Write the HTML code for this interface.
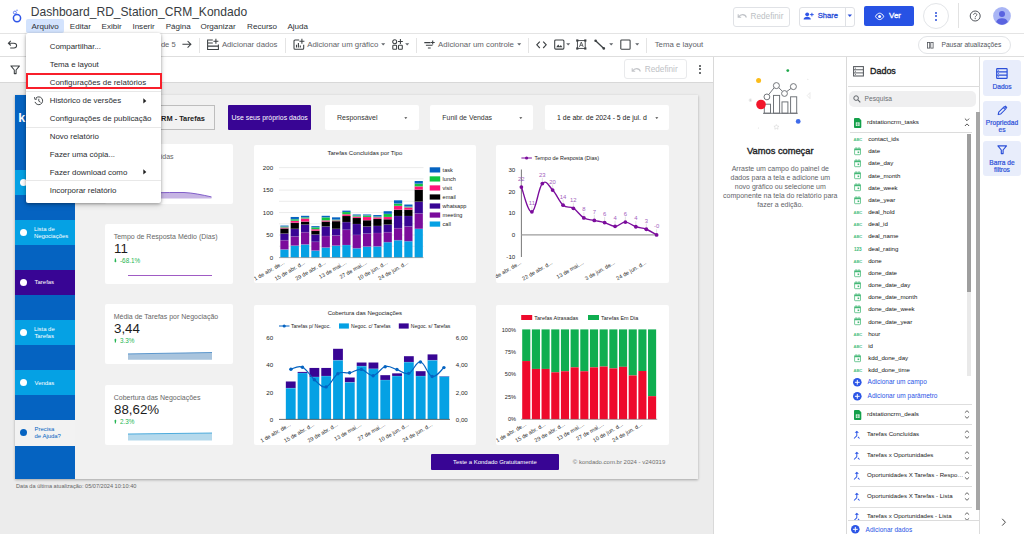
<!DOCTYPE html>
<html lang="pt-BR">
<head>
<meta charset="utf-8">
<title>Dashboard_RD_Station_CRM_Kondado</title>
<style>
*{box-sizing:border-box;margin:0;padding:0}
html,body{width:1024px;height:534px;overflow:hidden;background:#fff}
body{font-family:"Liberation Sans",sans-serif;color:#3c4043;position:relative}
.a{position:absolute}
.t{position:absolute;white-space:nowrap;line-height:1}
svg{position:absolute;overflow:visible}
</style>
</head>
<body>
<!-- base -->
<div class="a" style="left:0px;top:0px;width:1024px;height:33px;background:#fff;border-bottom:1px solid #e4e4e4;height:34px"></div>
<div class="a" style="left:0px;top:34px;width:1024px;height:23px;background:#fff;border-bottom:1px solid #dedede"></div>
<div class="a" style="left:0px;top:57px;width:714px;height:26px;background:#fff;border-bottom:1px solid #d8d8d8"></div>
<div class="a" style="left:0px;top:83px;width:714px;height:451px;background:#ececec;"></div>
<div class="a" style="left:14.5px;top:95px;width:683.6px;height:384px;background:#f1f1f1;box-shadow:0 1px 2.5px rgba(0,0,0,.3)"></div>
<div class="a" style="left:713px;top:57px;width:134px;height:477px;background:#fff;border-left:1px solid #d9d9d9"></div>
<div class="a" style="left:846.3px;top:57px;width:134px;height:477px;background:#fff;border-left:1px solid #d9d9d9"></div>
<div class="a" style="left:979.2px;top:57px;width:45px;height:477px;background:#fff;border-left:1px solid #d9d9d9"></div>
<!-- header -->
<svg style="left:10px;top:7px;" width="16" height="20" viewBox="0 0 16 20"><circle cx="7" cy="11.1" r="3.6" fill="none" stroke="#2f55e8" stroke-width="1.5"/><circle cx="4.9" cy="5.6" r="1.5" fill="none" stroke="#4a6cf0" stroke-width="0.85"/><circle cx="7" cy="3.2" r="0.75" fill="#6b86f3"/></svg>
<div class="a" style="left:26px;top:19px;width:38px;height:14px;background:#d3e3fd;border-radius:2px"></div>
<div class="t" style="left:30.80px;top:6px;font-size:12.05px;color:#383c41;">Dashboard_RD_Station_CRM_Kondado</div>
<div class="t" style="left:31.40px;top:23px;font-size:8.05px;color:#2d3136;">Arquivo</div>
<div class="t" style="left:69.80px;top:23px;font-size:8.05px;color:#2d3136;">Editar</div>
<div class="t" style="left:101.60px;top:23px;font-size:8.05px;color:#2d3136;">Exibir</div>
<div class="t" style="left:132.40px;top:23px;font-size:8.05px;color:#2d3136;">Inserir</div>
<div class="t" style="left:165.70px;top:23px;font-size:8.05px;color:#2d3136;">Página</div>
<div class="t" style="left:200.40px;top:23px;font-size:8.05px;color:#2d3136;">Organizar</div>
<div class="t" style="left:247.10px;top:23px;font-size:8.05px;color:#2d3136;">Recurso</div>
<div class="t" style="left:287.40px;top:23px;font-size:8.05px;color:#2d3136;">Ajuda</div>
<div class="a" style="left:733px;top:6.5px;width:57px;height:20px;background:#fff;border:1px solid #e0e2e6;border-radius:3px"></div>
<svg style="left:737px;top:12px;" width="10" height="8" viewBox="0 0 10 8"><path d="M1.2 2.2v3h3M1.4 5.1C2.6 3.4 4 2.6 5.6 2.6c1.9 0 3.2 1 3.8 2.9" fill="none" stroke="#bfc2c7" stroke-width="1.1"/></svg>
<div class="t" style="left:750.60px;top:13px;font-size:8.2px;color:#bcbfc4;">Redefinir</div>
<div class="a" style="left:799px;top:6.5px;width:56px;height:20px;background:#fff;border:1px solid #dfe1e5;border-radius:3px"></div>
<div class="a" style="left:844.5px;top:7px;width:1px;height:19px;background:#dfe1e5;"></div>
<svg style="left:803px;top:11px;" width="11" height="10" viewBox="0 0 11 10"><circle cx="4.2" cy="3.3" r="1.9" fill="#2f55e8"/><path d="M0.6 8.6c0-1.9 1.7-2.8 3.6-2.8s3.6 0.9 3.6 2.8z" fill="#2f55e8"/><path d="M8.9 1.8v3.6M7.1 3.6h3.6" stroke="#2f55e8" stroke-width="1" fill="none"/></svg>
<div class="t" style="left:817.70px;top:12px;font-size:7.65px;color:#2b4fd8;-webkit-text-stroke:0.3px #2b4fd8;">Share</div>
<svg style="left:846.8px;top:14.4px;" width="6" height="4" viewBox="0 0 6 4"><path d="M0.6 0.4h4.4L2.8 3z" fill="#2b4fd8"/></svg>
<div class="a" style="left:864px;top:6px;width:50px;height:20px;background:#2752e4;border-radius:2px"></div>
<svg style="left:875px;top:11.5px;" width="10" height="9" viewBox="0 0 10 9"><path d="M0.5 4.4C1.6 2.3 3.1 1.2 4.6 1.2s3 1.1 4.1 3.2C7.6 6.5 6.1 7.6 4.6 7.6S1.6 6.5 0.5 4.4z" fill="none" stroke="#fff" stroke-width="1"/><circle cx="4.6" cy="4.4" r="1.5" fill="#fff"/></svg>
<div class="t" style="left:889.00px;top:12px;font-size:8.0px;color:#fff;-webkit-text-stroke:0.3px #fff;">Ver</div>
<div class="a" style="left:923px;top:3px;width:26px;height:26px;background:#fff;border:1px solid #e3e5e8;border-radius:50%"></div>
<div class="a" style="left:934.9px;top:11.7px;width:2.2px;height:2.2px;background:#2b4fd8;border-radius:50%"></div>
<div class="a" style="left:934.9px;top:15.2px;width:2.2px;height:2.2px;background:#2b4fd8;border-radius:50%"></div>
<div class="a" style="left:934.9px;top:18.7px;width:2.2px;height:2.2px;background:#2b4fd8;border-radius:50%"></div>
<div class="a" style="left:958px;top:3px;width:1px;height:25px;background:#e2e2e2;"></div>
<svg style="left:969px;top:10px;" width="12" height="12" viewBox="0 0 12 12"><circle cx="6.2" cy="6" r="5" fill="none" stroke="#50545a" stroke-width="1"/><path d="M4.6 4.9c0-1 0.7-1.6 1.6-1.6s1.6 0.6 1.6 1.5c0 1.1-1.6 1.2-1.6 2.5" fill="none" stroke="#50545a" stroke-width="0.9"/><circle cx="6.2" cy="8.6" r="0.6" fill="#50545a"/></svg>
<svg style="left:992.5px;top:7px;" width="18" height="18" viewBox="0 0 18 18"><circle cx="9" cy="9" r="8.9" fill="#a9b5f5"/><circle cx="9" cy="6.9" r="3" fill="#5a63e0"/><path d="M3.2 14.8c0.8-2.6 3-3.6 5.8-3.6s5 1 5.8 3.6c-1.6 1.8-3.5 2.9-5.8 2.9s-4.2-1.1-5.8-2.9z" fill="#5a63e0"/></svg>
<!-- toolbar -->
<svg style="left:7.0px;top:39.5px;" width="12" height="10" viewBox="0 0 12 10"><path d="M3.8 0.9L1.4 3.2l2.4 2.3M1.6 3.2h5.3c1.6 0 2.7 1 2.7 2.4S8.5 8 6.9 8H3.2" fill="none" stroke="#3c4043" stroke-width="1.05"/></svg>
<div class="t" style="left:160.90px;top:41px;font-size:7.6px;color:#5f6368;">de 5</div>
<svg style="left:182.0px;top:40.0px;" width="10" height="9" viewBox="0 0 10 9"><path d="M0.4 4.3h8.4M5.6 1l3.3 3.3-3.3 3.3" fill="none" stroke="#3c4043" stroke-width="1.05"/></svg>
<div class="a" style="left:198.6px;top:38px;width:1px;height:15px;background:#e4e4e4;"></div>
<div class="a" style="left:284.9px;top:38px;width:1px;height:15px;background:#e4e4e4;"></div>
<div class="a" style="left:416.1px;top:38px;width:1px;height:15px;background:#e4e4e4;"></div>
<div class="a" style="left:528.3px;top:38px;width:1px;height:15px;background:#e4e4e4;"></div>
<div class="a" style="left:646.4px;top:38px;width:1px;height:15px;background:#e4e4e4;"></div>
<svg style="left:206.5px;top:39.3px;" width="12" height="11" viewBox="0 0 12 11"><path d="M5.8 0.9H0.6V10.4H11.4V5.6M0.6 3.9H5.8M0.6 7.1H11.4" fill="none" stroke="#3c4043" stroke-width="1.05"/><path d="M8.9 -0.3v5M6.4 2.2h5" fill="none" stroke="#3c4043" stroke-width="1.05"/></svg>
<div class="t" style="left:221.90px;top:41px;font-size:7.75px;color:#5f6368;">Adicionar dados</div>
<svg style="left:292.5px;top:39.3px;" width="12" height="11" viewBox="0 0 12 11"><path d="M6.2 1H2Q1 1 1 2V9.2Q1 10.2 2 10.2H9.7Q10.7 10.2 10.7 9.2V5.7" fill="none" stroke="#3c4043" stroke-width="1.05"/><path d="M3.5 8.4V5.7M5.4 8.4V4M7.3 8.4V6.5" stroke="#3c4043" stroke-width="1.1" fill="none"/><path d="M8.9 -0.3v5M6.4 2.2h5" fill="none" stroke="#3c4043" stroke-width="1.05"/></svg>
<div class="t" style="left:307.20px;top:41px;font-size:7.8px;color:#5f6368;">Adicionar um gráfico</div>
<svg style="left:381.2px;top:43.1px;" width="5" height="3" viewBox="0 0 5 3"><path d="M0.2 0.2h4L2.2 2.6z" fill="#5f6368"/></svg>
<svg style="left:392px;top:39.2px;" width="11" height="11" viewBox="0 0 11 11"><circle cx="2.7" cy="2.8" r="2" fill="none" stroke="#3c4043" stroke-width="1.05"/><rect x="0.8" y="6.3" width="3.8" height="4" rx="0.6" fill="none" stroke="#3c4043" stroke-width="1.05"/><rect x="6.5" y="6.3" width="3.8" height="4" rx="0.6" fill="none" stroke="#3c4043" stroke-width="1.05"/><path d="M8.4 0.1v4.8M6 2.5h4.8" stroke="#3c4043" stroke-width="1.05" fill="none"/></svg>
<svg style="left:405.2px;top:43.1px;" width="5" height="3" viewBox="0 0 5 3"><path d="M0.2 0.2h4L2.2 2.6z" fill="#5f6368"/></svg>
<svg style="left:424.0px;top:39.5px;" width="11" height="10" viewBox="0 0 11 10"><path d="M0.3 2.6h6.2M1.9 5.3h6.6M3.9 8h2.8" stroke="#3c4043" stroke-width="1.05" fill="none"/><path d="M8.7 0.5v4M6.7 2.5h4" stroke="#3c4043" stroke-width="1.05" fill="none"/></svg>
<div class="t" style="left:438.10px;top:41px;font-size:7.85px;color:#5f6368;">Adicionar um controle</div>
<svg style="left:516.6px;top:43.1px;" width="5" height="3" viewBox="0 0 5 3"><path d="M0.2 0.2h4L2.2 2.6z" fill="#5f6368"/></svg>
<svg style="left:536.0px;top:40.5px;" width="12" height="8" viewBox="0 0 12 8"><path d="M3.8 0.6L0.8 3.8l3 3.2M7.2 0.6l3 3.2-3 3.2" fill="none" stroke="#3c4043" stroke-width="1.1"/></svg>
<svg style="left:553.5px;top:39.3px;" width="11" height="11" viewBox="0 0 11 11"><rect x="0.7" y="0.9" width="9.2" height="9.2" rx="1" fill="none" stroke="#3c4043" stroke-width="1.05"/><path d="M2.2 8.2l2-2.6 1.5 1.8 1.1-1.3 1.6 2.1z" fill="#3c4043"/></svg>
<svg style="left:566.4px;top:43.1px;" width="5" height="3" viewBox="0 0 5 3"><path d="M0.2 0.2h4L2.2 2.6z" fill="#5f6368"/></svg>
<svg style="left:576.3px;top:39.3px;" width="11" height="11" viewBox="0 0 11 11"><rect x="1.4" y="1.6" width="7.8" height="7.8" fill="none" stroke="#3c4043" stroke-width="0.9"/><rect x="0.2" y="0.4" width="2.2" height="2.2" fill="#3c4043"/><rect x="8.2" y="0.4" width="2.2" height="2.2" fill="#3c4043"/><rect x="0.2" y="8.4" width="2.2" height="2.2" fill="#3c4043"/><rect x="8.2" y="8.4" width="2.2" height="2.2" fill="#3c4043"/><path d="M3.4 7.9l1.9-4.8 1.9 4.8M4.1 6.3h2.4" fill="none" stroke="#3c4043" stroke-width="0.8"/></svg>
<svg style="left:593.5px;top:39.3px;" width="12" height="11" viewBox="0 0 12 11"><path d="M1.6 1.8l8.2 7.6" stroke="#3c4043" stroke-width="1.3" fill="none"/><circle cx="1.6" cy="1.8" r="1.3" fill="#3c4043"/><circle cx="9.8" cy="9.4" r="1.3" fill="#3c4043"/></svg>
<svg style="left:609.2px;top:43.1px;" width="5" height="3" viewBox="0 0 5 3"><path d="M0.2 0.2h4L2.2 2.6z" fill="#5f6368"/></svg>
<svg style="left:619.5px;top:39.3px;" width="11" height="11" viewBox="0 0 11 11"><rect x="0.8" y="0.9" width="9.3" height="9.3" rx="0.8" fill="none" stroke="#3c4043" stroke-width="1.05"/></svg>
<svg style="left:634.9px;top:43.1px;" width="5" height="3" viewBox="0 0 5 3"><path d="M0.2 0.2h4L2.2 2.6z" fill="#5f6368"/></svg>
<div class="t" style="left:654.70px;top:41px;font-size:7.8px;color:#5f6368;">Tema e layout</div>
<div class="a" style="left:918.3px;top:35.9px;width:92.7px;height:17.8px;background:#fff;border:1px solid #e2e4e7;border-radius:9px"></div>
<svg style="left:926.9px;top:41.6px;" width="7" height="7" viewBox="0 0 7 7"><rect x="0.4" y="0.4" width="2.3" height="5.7" fill="none" stroke="#50545a" stroke-width="0.8"/><rect x="3.8" y="0.4" width="2.3" height="5.7" fill="none" stroke="#50545a" stroke-width="0.8"/></svg>
<div class="t" style="left:941.50px;top:42px;font-size:6.65px;color:#50545a;">Pausar atualizações</div>
<!-- filterbar -->
<svg style="left:9.5px;top:64.5px;" width="11" height="10" viewBox="0 0 11 10"><path d="M0.9 0.9h8.6L6.1 5v3.6H4.3V5z" fill="none" stroke="#3c4043" stroke-width="1.05" stroke-linejoin="round"/></svg>
<div class="a" style="left:624px;top:59.3px;width:62.6px;height:20.2px;background:#fff;border:1px solid #e9eaec;border-radius:3px"></div>
<svg style="left:630.5px;top:65.5px;" width="10" height="8" viewBox="0 0 10 8"><path d="M1.2 2.2v3h3M1.4 5.1C2.6 3.4 4 2.6 5.6 2.6c1.9 0 3.2 1 3.8 2.9" fill="none" stroke="#c3c5c9" stroke-width="1.1"/></svg>
<div class="t" style="left:644.70px;top:66px;font-size:8.25px;color:#c0c2c6;">Redefinir</div>
<div class="a" style="left:699px;top:64.6px;width:2.1px;height:2.1px;background:#3c4043;border-radius:50%"></div>
<div class="a" style="left:699px;top:68.1px;width:2.1px;height:2.1px;background:#3c4043;border-radius:50%"></div>
<div class="a" style="left:699px;top:71.6px;width:2.1px;height:2.1px;background:#3c4043;border-radius:50%"></div>
<!-- vamos -->
<svg style="left:730px;top:58px;" width="100" height="82" viewBox="0 0 100 82"><g fill="none" stroke="#6b6f74" stroke-width="0.95">
<rect x="34.3" y="46.2" width="6.2" height="9"/><rect x="43.5" y="37.4" width="6.1" height="17.8"/><rect x="52" y="43.9" width="5.9" height="11.3"/><rect x="60.6" y="38.8" width="6.1" height="16.4"/>
<path d="M33 55.3h34.7"/>
<path d="M38.7 36.6l5.7-7.2M48.7 29.6l3.8 3.8M56.7 33.6l4.6-3.4"/>
<circle cx="36.9" cy="38.9" r="2.9" fill="#fff"/><circle cx="46.4" cy="27.6" r="3" fill="#fff"/><circle cx="54.5" cy="35.5" r="2.9" fill="#fff"/><circle cx="63.4" cy="28.6" r="3" fill="#fff"/>
</g>
<circle cx="31" cy="46.5" r="4.8" fill="#f2162b"/>
<circle cx="28.6" cy="22.6" r="2.5" fill="#fbbc1a"/>
<circle cx="57.8" cy="12.6" r="1.4" fill="#1ea84a"/>
<circle cx="68.2" cy="63.4" r="2.4" fill="#3f6bea"/>
<path d="M19.2 41l2.4 2.4M21.6 41l-2.4 2.4M20.4 40.4v3.6M18.6 42.2h3.6" stroke="#cfcfcf" stroke-width="0.5" fill="none"/>
<path d="M46.4 66.6l0.8 1.5 1.7.2-1.2 1.2.3 1.7-1.6-.8-1.6.8.3-1.7-1.2-1.2 1.7-.2z" fill="none" stroke="#cdcdcd" stroke-width="0.5"/>
<path d="M80 34.6l-2.8 3 2.8 3z" fill="none" stroke="#dddddd" stroke-width="0.6"/>
<circle cx="77.9" cy="21.2" r="0.5" fill="#d8d8d8"/><circle cx="28.4" cy="69.9" r="0.5" fill="#d8d8d8"/></svg>
<div class="t" style="left:780.30px;top:147px;font-size:9.3px;color:#202124;transform:translateX(-50%);-webkit-text-stroke:0.35px #202124;">Vamos começar</div>
<div class="t" style="left:780.30px;top:165px;font-size:7.0px;color:#5f6368;transform:translateX(-50%);">Arraste um campo do painel de</div>
<div class="t" style="left:780.30px;top:174px;font-size:7.0px;color:#5f6368;transform:translateX(-50%);">dados para a tela e adicione um</div>
<div class="t" style="left:780.30px;top:183px;font-size:7.0px;color:#5f6368;transform:translateX(-50%);">novo gráfico ou selecione um</div>
<div class="t" style="left:780.30px;top:192px;font-size:7.0px;color:#5f6368;transform:translateX(-50%);">componente na tela do relatório para</div>
<div class="t" style="left:780.30px;top:201px;font-size:7.0px;color:#5f6368;transform:translateX(-50%);">fazer a edição.</div>
<!-- dados -->
<svg style="left:853px;top:66.2px;" width="11" height="11" viewBox="0 0 11 11"><rect x="0.6" y="0.6" width="9.8" height="9.4" fill="none" stroke="#55595e" stroke-width="1.05"/><path d="M0.6 3.75h9.8M0.6 6.9h9.8" stroke="#55595e" stroke-width="0.95" fill="none"/><path d="M2 2.2h1M2 5.3h1M2 8.45h1" stroke="#55595e" stroke-width="0.8"/></svg>
<div class="t" style="left:870.00px;top:67px;font-size:8.95px;color:#202124;-webkit-text-stroke:0.35px #202124;">Dados</div>
<div class="a" style="left:848px;top:85.5px;width:132px;height:1px;background:#dcdcdc;"></div>
<div class="a" style="left:849.4px;top:90.6px;width:126.8px;height:16.1px;background:#efeff0;border-radius:5px"></div>
<svg style="left:853.3px;top:94.8px;" width="8" height="8" viewBox="0 0 8 8"><circle cx="3.1" cy="3.1" r="2.3" fill="none" stroke="#5f6368" stroke-width="1"/><path d="M4.9 4.9l2.4 2.4" stroke="#5f6368" stroke-width="1.1"/></svg>
<div class="t" style="left:864.60px;top:96px;font-size:6.65px;color:#6a6e73;">Pesquisa</div>
<svg style="left:853.5px;top:117.6px;" width="8" height="10" viewBox="0 0 8 10"><path d="M0.9 0h4.2l2.2 2.2v6.9a0.9 0.9 0 0 1-0.9 0.9H0.9a0.9 0.9 0 0 1-0.9-0.9V0.9A0.9 0.9 0 0 1 0.9 0z" fill="#14a04a"/><rect x="1.8" y="4.4" width="3.8" height="3.4" fill="#fff"/><path d="M1.8 6.1h3.8M3.7 4.4v3.4" stroke="#14a04a" stroke-width="0.6"/></svg>
<div class="t" style="left:867.00px;top:119px;font-size:6.2px;color:#151515;">rdstationcrm_tasks</div>
<svg style="left:963.8px;top:118.4px;" width="6" height="9" viewBox="0 0 6 9"><path d="M0.9 0.6l2.1 2.1 2.1-2.1M0.9 8l2.1-2.1L5.1 8" fill="none" stroke="#444" stroke-width="0.9"/></svg>
<div class="a" style="left:850px;top:132px;width:122px;height:1px;background:#dcdcdc;"></div>
<div class="a" style="left:967.4px;top:133.6px;width:3.8px;height:242px;background:#e9e9e9;"></div>
<div class="a" style="left:967.4px;top:133.6px;width:3.8px;height:158.4px;background:#9e9e9e;"></div>
<div class="a" style="left:975.6px;top:112.4px;width:4px;height:398px;background:#a6a6a6;"></div>
<div class="t" style="left:853.60px;top:138px;font-size:4.15px;color:#4cc083;font-weight:700;letter-spacing:-0.15px;">ABC</div>
<div class="t" style="left:868.20px;top:136px;font-size:6.1px;color:#151515;">contact_ids</div>
<svg style="left:854px;top:147.0px;" width="8" height="9" viewBox="0 0 8 9"><rect x="0.6" y="1.3" width="5.9" height="6.4" rx="0.6" fill="none" stroke="#45b877" stroke-width="0.75"/><path d="M0.6 2.6h5.9" stroke="#45b877" stroke-width="1.3"/><path d="M2.1 0.3v1.5M5 0.3v1.5" stroke="#45b877" stroke-width="0.7"/><rect x="3.6" y="4.5" width="1.6" height="1.6" fill="#45b877"/></svg>
<div class="t" style="left:868.20px;top:148px;font-size:6.1px;color:#151515;">date</div>
<svg style="left:854px;top:159.1px;" width="8" height="9" viewBox="0 0 8 9"><rect x="0.6" y="1.3" width="5.9" height="6.4" rx="0.6" fill="none" stroke="#45b877" stroke-width="0.75"/><path d="M0.6 2.6h5.9" stroke="#45b877" stroke-width="1.3"/><path d="M2.1 0.3v1.5M5 0.3v1.5" stroke="#45b877" stroke-width="0.7"/><rect x="3.6" y="4.5" width="1.6" height="1.6" fill="#45b877"/></svg>
<div class="t" style="left:868.20px;top:160px;font-size:6.1px;color:#151515;">date_day</div>
<svg style="left:854px;top:171.3px;" width="8" height="9" viewBox="0 0 8 9"><rect x="0.6" y="1.3" width="5.9" height="6.4" rx="0.6" fill="none" stroke="#45b877" stroke-width="0.75"/><path d="M0.6 2.6h5.9" stroke="#45b877" stroke-width="1.3"/><path d="M2.1 0.3v1.5M5 0.3v1.5" stroke="#45b877" stroke-width="0.7"/><rect x="3.6" y="4.5" width="1.6" height="1.6" fill="#45b877"/></svg>
<div class="t" style="left:868.20px;top:173px;font-size:6.1px;color:#151515;">date_month</div>
<svg style="left:854px;top:183.4px;" width="8" height="9" viewBox="0 0 8 9"><rect x="0.6" y="1.3" width="5.9" height="6.4" rx="0.6" fill="none" stroke="#45b877" stroke-width="0.75"/><path d="M0.6 2.6h5.9" stroke="#45b877" stroke-width="1.3"/><path d="M2.1 0.3v1.5M5 0.3v1.5" stroke="#45b877" stroke-width="0.7"/><rect x="3.6" y="4.5" width="1.6" height="1.6" fill="#45b877"/></svg>
<div class="t" style="left:868.20px;top:185px;font-size:6.1px;color:#151515;">date_week</div>
<svg style="left:854px;top:195.6px;" width="8" height="9" viewBox="0 0 8 9"><rect x="0.6" y="1.3" width="5.9" height="6.4" rx="0.6" fill="none" stroke="#45b877" stroke-width="0.75"/><path d="M0.6 2.6h5.9" stroke="#45b877" stroke-width="1.3"/><path d="M2.1 0.3v1.5M5 0.3v1.5" stroke="#45b877" stroke-width="0.7"/><rect x="3.6" y="4.5" width="1.6" height="1.6" fill="#45b877"/></svg>
<div class="t" style="left:868.20px;top:197px;font-size:6.1px;color:#151515;">date_year</div>
<div class="t" style="left:853.60px;top:211px;font-size:4.15px;color:#4cc083;font-weight:700;letter-spacing:-0.15px;">ABC</div>
<div class="t" style="left:868.20px;top:209px;font-size:6.1px;color:#151515;">deal_hold</div>
<div class="t" style="left:853.60px;top:223px;font-size:4.15px;color:#4cc083;font-weight:700;letter-spacing:-0.15px;">ABC</div>
<div class="t" style="left:868.20px;top:221px;font-size:6.1px;color:#151515;">deal_id</div>
<div class="t" style="left:853.60px;top:235px;font-size:4.15px;color:#4cc083;font-weight:700;letter-spacing:-0.15px;">ABC</div>
<div class="t" style="left:868.20px;top:233px;font-size:6.1px;color:#151515;">deal_name</div>
<div class="t" style="left:853.90px;top:248px;font-size:4.7px;color:#3fba78;font-weight:700;">123</div>
<div class="t" style="left:868.20px;top:246px;font-size:6.1px;color:#151515;">deal_rating</div>
<div class="t" style="left:853.60px;top:260px;font-size:4.15px;color:#4cc083;font-weight:700;letter-spacing:-0.15px;">ABC</div>
<div class="t" style="left:868.20px;top:258px;font-size:6.1px;color:#151515;">done</div>
<svg style="left:854px;top:268.6px;" width="8" height="9" viewBox="0 0 8 9"><rect x="0.6" y="1.3" width="5.9" height="6.4" rx="0.6" fill="none" stroke="#45b877" stroke-width="0.75"/><path d="M0.6 2.6h5.9" stroke="#45b877" stroke-width="1.3"/><path d="M2.1 0.3v1.5M5 0.3v1.5" stroke="#45b877" stroke-width="0.7"/><rect x="3.6" y="4.5" width="1.6" height="1.6" fill="#45b877"/></svg>
<div class="t" style="left:868.20px;top:270px;font-size:6.1px;color:#151515;">done_date</div>
<svg style="left:854px;top:280.8px;" width="8" height="9" viewBox="0 0 8 9"><rect x="0.6" y="1.3" width="5.9" height="6.4" rx="0.6" fill="none" stroke="#45b877" stroke-width="0.75"/><path d="M0.6 2.6h5.9" stroke="#45b877" stroke-width="1.3"/><path d="M2.1 0.3v1.5M5 0.3v1.5" stroke="#45b877" stroke-width="0.7"/><rect x="3.6" y="4.5" width="1.6" height="1.6" fill="#45b877"/></svg>
<div class="t" style="left:868.20px;top:282px;font-size:6.1px;color:#151515;">done_date_day</div>
<svg style="left:854px;top:293.0px;" width="8" height="9" viewBox="0 0 8 9"><rect x="0.6" y="1.3" width="5.9" height="6.4" rx="0.6" fill="none" stroke="#45b877" stroke-width="0.75"/><path d="M0.6 2.6h5.9" stroke="#45b877" stroke-width="1.3"/><path d="M2.1 0.3v1.5M5 0.3v1.5" stroke="#45b877" stroke-width="0.7"/><rect x="3.6" y="4.5" width="1.6" height="1.6" fill="#45b877"/></svg>
<div class="t" style="left:868.20px;top:294px;font-size:6.1px;color:#151515;">done_date_month</div>
<svg style="left:854px;top:305.1px;" width="8" height="9" viewBox="0 0 8 9"><rect x="0.6" y="1.3" width="5.9" height="6.4" rx="0.6" fill="none" stroke="#45b877" stroke-width="0.75"/><path d="M0.6 2.6h5.9" stroke="#45b877" stroke-width="1.3"/><path d="M2.1 0.3v1.5M5 0.3v1.5" stroke="#45b877" stroke-width="0.7"/><rect x="3.6" y="4.5" width="1.6" height="1.6" fill="#45b877"/></svg>
<div class="t" style="left:868.20px;top:306px;font-size:6.1px;color:#151515;">done_date_week</div>
<svg style="left:854px;top:317.3px;" width="8" height="9" viewBox="0 0 8 9"><rect x="0.6" y="1.3" width="5.9" height="6.4" rx="0.6" fill="none" stroke="#45b877" stroke-width="0.75"/><path d="M0.6 2.6h5.9" stroke="#45b877" stroke-width="1.3"/><path d="M2.1 0.3v1.5M5 0.3v1.5" stroke="#45b877" stroke-width="0.7"/><rect x="3.6" y="4.5" width="1.6" height="1.6" fill="#45b877"/></svg>
<div class="t" style="left:868.20px;top:319px;font-size:6.1px;color:#151515;">done_date_year</div>
<div class="t" style="left:853.60px;top:333px;font-size:4.15px;color:#4cc083;font-weight:700;letter-spacing:-0.15px;">ABC</div>
<div class="t" style="left:868.20px;top:331px;font-size:6.1px;color:#151515;">hour</div>
<div class="t" style="left:853.60px;top:345px;font-size:4.15px;color:#4cc083;font-weight:700;letter-spacing:-0.15px;">ABC</div>
<div class="t" style="left:868.20px;top:343px;font-size:6.1px;color:#151515;">id</div>
<svg style="left:854px;top:353.9px;" width="8" height="9" viewBox="0 0 8 9"><rect x="0.6" y="1.3" width="5.9" height="6.4" rx="0.6" fill="none" stroke="#45b877" stroke-width="0.75"/><path d="M0.6 2.6h5.9" stroke="#45b877" stroke-width="1.3"/><path d="M2.1 0.3v1.5M5 0.3v1.5" stroke="#45b877" stroke-width="0.7"/><rect x="3.6" y="4.5" width="1.6" height="1.6" fill="#45b877"/></svg>
<div class="t" style="left:868.20px;top:355px;font-size:6.1px;color:#151515;">kdd_done_day</div>
<div class="t" style="left:853.60px;top:369px;font-size:4.15px;color:#4cc083;font-weight:700;letter-spacing:-0.15px;">ABC</div>
<div class="t" style="left:868.20px;top:367px;font-size:6.1px;color:#151515;">kdd_done_time</div>
<svg style="left:852.7px;top:377.6px;" width="9" height="9" viewBox="0 0 9 9"><circle cx="4.3" cy="4.3" r="4.3" fill="#2b55e6"/><path d="M4.3 1.9v4.8M1.9 4.3h4.8" stroke="#fff" stroke-width="1"/></svg>
<div class="t" style="left:867.60px;top:379px;font-size:6.5px;color:#2b55e6;">Adicionar um campo</div>
<svg style="left:852.7px;top:391.6px;" width="9" height="9" viewBox="0 0 9 9"><circle cx="4.3" cy="4.3" r="4.3" fill="#2b55e6"/><path d="M4.3 1.9v4.8M1.9 4.3h4.8" stroke="#fff" stroke-width="1"/></svg>
<div class="t" style="left:867.60px;top:393px;font-size:6.55px;color:#2b55e6;">Adicionar um parâmetro</div>
<div class="a" style="left:849.5px;top:403.6px;width:122.8px;height:1px;background:#dedede;"></div>
<div class="a" style="left:849.5px;top:424.3px;width:122.8px;height:1px;background:#dedede;"></div>
<div class="a" style="left:849.5px;top:444.8px;width:122.8px;height:1px;background:#dedede;"></div>
<div class="a" style="left:849.5px;top:465.3px;width:122.8px;height:1px;background:#dedede;"></div>
<div class="a" style="left:849.5px;top:486.2px;width:122.8px;height:1px;background:#dedede;"></div>
<div class="a" style="left:849.5px;top:506.5px;width:122.8px;height:1px;background:#dedede;"></div>
<svg style="left:853.5px;top:409.6px;" width="8" height="10" viewBox="0 0 8 10"><path d="M0.9 0h4.2l2.2 2.2v6.9a0.9 0.9 0 0 1-0.9 0.9H0.9a0.9 0.9 0 0 1-0.9-0.9V0.9A0.9 0.9 0 0 1 0.9 0z" fill="#14a04a"/><rect x="1.8" y="4.4" width="3.8" height="3.4" fill="#fff"/><path d="M1.8 6.1h3.8M3.7 4.4v3.4" stroke="#14a04a" stroke-width="0.6"/></svg>
<div class="t" style="left:867.00px;top:411px;font-size:6.15px;color:#151515;">rdstationcrm_deals</div>
<svg style="left:964px;top:409.8px;" width="6" height="9" viewBox="0 0 6 9"><path d="M0.9 2.7L3 0.7l2.1 2M0.9 6.3L3 8.3l2.1-2" fill="none" stroke="#555" stroke-width="0.9"/></svg>
<svg style="left:851.4px;top:429.40000000000003px;" width="11.6" height="11.6" viewBox="0 0 24 24"><path d="M17 20.41L18.41 19 15 15.59 13.59 17 17 20.41zM7.5 8H11v5.59L5.59 19 7 20.41l6-6V8h3.5L12 3.5 7.5 8z" fill="#2b55e6"/></svg>
<div class="t" style="left:867.00px;top:431px;font-size:6.1px;color:#222;">Tarefas Concluídas</div>
<svg style="left:964px;top:430.0px;" width="6" height="9" viewBox="0 0 6 9"><path d="M0.9 2.7L3 0.7l2.1 2M0.9 6.3L3 8.3l2.1-2" fill="none" stroke="#555" stroke-width="0.9"/></svg>
<svg style="left:851.4px;top:449.90000000000003px;" width="11.6" height="11.6" viewBox="0 0 24 24"><path d="M17 20.41L18.41 19 15 15.59 13.59 17 17 20.41zM7.5 8H11v5.59L5.59 19 7 20.41l6-6V8h3.5L12 3.5 7.5 8z" fill="#2b55e6"/></svg>
<div class="t" style="left:867.00px;top:452px;font-size:6.1px;color:#222;">Tarefas x Oportunidades</div>
<svg style="left:964px;top:450.5px;" width="6" height="9" viewBox="0 0 6 9"><path d="M0.9 2.7L3 0.7l2.1 2M0.9 6.3L3 8.3l2.1-2" fill="none" stroke="#555" stroke-width="0.9"/></svg>
<svg style="left:851.4px;top:470.40000000000003px;" width="11.6" height="11.6" viewBox="0 0 24 24"><path d="M17 20.41L18.41 19 15 15.59 13.59 17 17 20.41zM7.5 8H11v5.59L5.59 19 7 20.41l6-6V8h3.5L12 3.5 7.5 8z" fill="#2b55e6"/></svg>
<div class="t" style="left:867.00px;top:472px;font-size:6.1px;color:#222;">Oportunidades X Tarefas - Respo…</div>
<svg style="left:964px;top:471.0px;" width="6" height="9" viewBox="0 0 6 9"><path d="M0.9 2.7L3 0.7l2.1 2M0.9 6.3L3 8.3l2.1-2" fill="none" stroke="#555" stroke-width="0.9"/></svg>
<svg style="left:851.4px;top:490.90000000000003px;" width="11.6" height="11.6" viewBox="0 0 24 24"><path d="M17 20.41L18.41 19 15 15.59 13.59 17 17 20.41zM7.5 8H11v5.59L5.59 19 7 20.41l6-6V8h3.5L12 3.5 7.5 8z" fill="#2b55e6"/></svg>
<div class="t" style="left:867.00px;top:493px;font-size:6.1px;color:#222;">Oportunidades X Tarefas - Lista</div>
<svg style="left:964px;top:491.5px;" width="6" height="9" viewBox="0 0 6 9"><path d="M0.9 2.7L3 0.7l2.1 2M0.9 6.3L3 8.3l2.1-2" fill="none" stroke="#555" stroke-width="0.9"/></svg>
<svg style="left:851.4px;top:511.2px;" width="11.6" height="11.6" viewBox="0 0 24 24"><path d="M17 20.41L18.41 19 15 15.59 13.59 17 17 20.41zM7.5 8H11v5.59L5.59 19 7 20.41l6-6V8h3.5L12 3.5 7.5 8z" fill="#2b55e6"/></svg>
<div class="t" style="left:867.00px;top:513px;font-size:6.1px;color:#222;">Tarefas x Oportunidades - Lista</div>
<svg style="left:964px;top:511.79999999999995px;" width="6" height="9" viewBox="0 0 6 9"><path d="M0.9 2.7L3 0.7l2.1 2M0.9 6.3L3 8.3l2.1-2" fill="none" stroke="#555" stroke-width="0.9"/></svg>
<div class="a" style="left:848px;top:520px;width:132px;height:14px;background:#fff;border-top:1px solid #dcdcdc;border-right:1px solid #dcdcdc"></div>
<svg style="left:851px;top:525.3px;" width="9" height="9" viewBox="0 0 9 9"><circle cx="4.3" cy="4.3" r="4.3" fill="#2b55e6"/><path d="M4.3 1.9v4.8M1.9 4.3h4.8" stroke="#fff" stroke-width="1"/></svg>
<div class="t" style="left:865.60px;top:527px;font-size:6.5px;color:#2b55e6;">Adicionar dados</div>
<!-- rail -->
<div class="a" style="left:983.2px;top:60.3px;width:37.6px;height:35.6px;background:#e8edfb;border-radius:3px"></div>
<svg style="left:996px;top:68px;" width="12" height="11" viewBox="0 0 12 11"><rect x="0.7" y="0.7" width="10.4" height="9.6" rx="0.6" fill="none" stroke="#2b4fd8" stroke-width="1.2"/><path d="M0.7 3.9h10.4M0.7 7.1h10.4" stroke="#2b4fd8" stroke-width="1.1" fill="none"/><path d="M2.1 2.3h1M2.1 5.5h1M2.1 8.7h1" stroke="#2b4fd8" stroke-width="0.8"/></svg>
<div class="t" style="left:1002.00px;top:84px;font-size:6.6px;color:#2b4fd8;transform:translateX(-50%);-webkit-text-stroke:0.2px #2b4fd8;">Dados</div>
<div class="a" style="left:983.2px;top:100.6px;width:37.6px;height:35px;background:#e8edfb;border-radius:3px"></div>
<svg style="left:996.5px;top:105px;" width="11" height="11" viewBox="0 0 11 11"><path d="M1.2 9.6l0.5-2.4 5.6-5.6 1.9 1.9-5.6 5.6zM6.3 2.6l1.9 1.9" fill="none" stroke="#2b4fd8" stroke-width="1.05" stroke-linejoin="round"/><path d="M8 0.9l1.9 1.9" stroke="#2b4fd8" stroke-width="1.3"/></svg>
<div class="t" style="left:1002.00px;top:120px;font-size:6.6px;color:#2b4fd8;transform:translateX(-50%);-webkit-text-stroke:0.2px #2b4fd8;">Propriedad</div>
<div class="t" style="left:1002.00px;top:127px;font-size:6.6px;color:#2b4fd8;transform:translateX(-50%);-webkit-text-stroke:0.2px #2b4fd8;">es</div>
<div class="a" style="left:983.2px;top:140.6px;width:37.6px;height:35px;background:#e8edfb;border-radius:3px"></div>
<svg style="left:996.8px;top:144.8px;" width="11" height="10" viewBox="0 0 11 10"><path d="M0.9 0.9h8.6L6.1 5v3.6H4.3V5z" fill="none" stroke="#2b4fd8" stroke-width="1.15" stroke-linejoin="round"/></svg>
<div class="t" style="left:1002.00px;top:160px;font-size:6.6px;color:#2b4fd8;transform:translateX(-50%);-webkit-text-stroke:0.2px #2b4fd8;">Barra de</div>
<div class="t" style="left:1002.00px;top:167px;font-size:6.6px;color:#2b4fd8;transform:translateX(-50%);-webkit-text-stroke:0.2px #2b4fd8;">filtros</div>
<svg style="left:1000.5px;top:518px;" width="6" height="9" viewBox="0 0 6 9"><path d="M1.2 0.8l3.2 3.4-3.2 3.4" fill="none" stroke="#444" stroke-width="1"/></svg>
<!-- dashboard -->
<div class="a" style="left:14.5px;top:95px;width:60px;height:384px;background:#0563c1;"></div>
<div class="t" style="left:18.30px;top:112px;font-size:12.5px;color:#fff;font-weight:700;">k</div>
<div class="a" style="left:14.5px;top:170px;width:60px;height:25px;background:#05a1e4;"></div>
<div class="a" style="left:14.5px;top:220px;width:60px;height:25px;background:#05a1e4;"></div>
<div class="a" style="left:14.5px;top:320px;width:60px;height:25px;background:#05a1e4;"></div>
<div class="a" style="left:14.5px;top:370px;width:60px;height:25px;background:#05a1e4;"></div>
<div class="a" style="left:14.5px;top:270px;width:60px;height:25px;background:#380594;"></div>
<div class="a" style="left:14.5px;top:420px;width:60px;height:25.5px;background:#f2f2f2;"></div>
<div class="a" style="left:19.8px;top:178.8px;width:7px;height:7px;background:#fff;border-radius:50%"></div>
<div class="a" style="left:19.8px;top:228.8px;width:7px;height:7px;background:#fff;border-radius:50%"></div>
<div class="a" style="left:19.8px;top:278.8px;width:7px;height:7px;background:#fff;border-radius:50%"></div>
<div class="a" style="left:19.8px;top:328.8px;width:7px;height:7px;background:#fff;border-radius:50%"></div>
<div class="a" style="left:19.8px;top:378.8px;width:7px;height:7px;background:#fff;border-radius:50%"></div>
<div class="a" style="left:19.8px;top:428.9px;width:7px;height:7px;background:#0563c1;border-radius:50%"></div>
<div class="t" style="left:33.90px;top:227px;font-size:5.95px;color:#fff;">Lista de</div>
<div class="t" style="left:33.90px;top:234px;font-size:5.95px;color:#fff;">Negociações</div>
<div class="t" style="left:34.60px;top:280px;font-size:5.95px;color:#fff;">Tarefas</div>
<div class="t" style="left:33.90px;top:327px;font-size:5.95px;color:#fff;">Lista de</div>
<div class="t" style="left:34.40px;top:334px;font-size:5.95px;color:#fff;">Tarefas</div>
<div class="t" style="left:34.50px;top:381px;font-size:5.95px;color:#fff;">Vendas</div>
<div class="t" style="left:34.50px;top:427px;font-size:5.95px;color:#0563c1;">Precisa</div>
<div class="t" style="left:34.50px;top:434px;font-size:5.95px;color:#0563c1;">de Ajuda?</div>
<div class="t" style="left:16.00px;top:484px;font-size:5.6px;color:#666;">Data da última atualização: 05/07/2024 10:10:40</div>
<div class="a" style="left:150px;top:105px;width:64.8px;height:25px;background:#f2f2f2;border:1px solid #bdbdbd"></div>
<div class="t" style="left:161.10px;top:115px;font-size:7.4px;color:#1d1d1d;font-weight:700;">RM - Tarefas</div>
<div class="a" style="left:228.2px;top:105px;width:83.3px;height:25px;background:#380594;border-radius:1px"></div>
<div class="t" style="left:231.60px;top:115px;font-size:6.9px;color:#fff;">Use seus próprios dados</div>
<div class="a" style="left:325px;top:105px;width:94px;height:25px;background:#fff;border-radius:2px"></div>
<div class="t" style="left:337.00px;top:114px;font-size:7.0px;color:#333;">Responsável</div>
<svg style="left:404px;top:116.6px;" width="4" height="3" viewBox="0 0 4 3"><path d="M0.3 0.2h3L1.8 2z" fill="#444"/></svg>
<div class="a" style="left:430.2px;top:105px;width:103px;height:25px;background:#fff;border-radius:2px"></div>
<div class="t" style="left:442.30px;top:115px;font-size:6.95px;color:#333;">Funil de Vendas</div>
<svg style="left:518.6px;top:116.6px;" width="4" height="3" viewBox="0 0 4 3"><path d="M0.3 0.2h3L1.8 2z" fill="#444"/></svg>
<div class="a" style="left:545.2px;top:105px;width:124.2px;height:25px;background:#fff;border-radius:2px"></div>
<div class="t" style="left:557.10px;top:115px;font-size:6.9px;color:#222;">1 de abr. de 2024 - 5 de jul. d</div>
<svg style="left:654.7px;top:116.6px;" width="4" height="3" viewBox="0 0 4 3"><path d="M0.3 0.2h3L1.8 2z" fill="#444"/></svg>
<div class="a" style="left:105.4px;top:144px;width:128.1px;height:60px;background:#fff;border-radius:2px"></div>
<div class="t" style="left:113.70px;top:153px;font-size:7.0px;color:#666;">Tarefas Concluídas</div>
<div class="t" style="left:114.00px;top:162px;font-size:13.3px;color:#1c1c1c;">1.410</div>
<svg style="left:114.4px;top:177.6px;" width="3" height="5" viewBox="0 0 3 5"><path d="M0.8 4.4h1.2V2.2h0.8L1.4 0.5 0 2.2h0.8z" fill="#25b552"/></svg>
<div class="t" style="left:120.00px;top:178px;font-size:6.35px;color:#25b552;">&nbsp;</div>
<svg style="left:0;top:0" width="714" height="534"><path d="M128 198.5L128 194.4C145 192.7 165 192.4 184 192.5C192 192.7 203 195 211.5 196.9L211.5 198.5z" fill="#c6b4e3"/><path d="M128 194.4C145 192.7 165 192.4 184 192.5C192 192.7 203 195 211.5 196.9" fill="none" stroke="#6a40bf" stroke-width="0.8"/></svg>
<div class="a" style="left:105.4px;top:224.2px;width:128.1px;height:60px;background:#fff;border-radius:2px"></div>
<div class="t" style="left:113.70px;top:233.2px;font-size:7.0px;color:#666;">Tempo de Resposta Médio (Dias)</div>
<div class="t" style="left:114.00px;top:242.2px;font-size:13.3px;color:#1c1c1c;">11</div>
<svg style="left:114.4px;top:257.8px;" width="3" height="5" viewBox="0 0 3 5"><path d="M0.8 0.5h1.2v2.2h0.8L1.4 4.4 0 2.7h0.8z" fill="#25b552"/></svg>
<div class="t" style="left:120.00px;top:258.2px;font-size:6.35px;color:#25b552;">-68.1%</div>
<div class="a" style="left:128px;top:274.8px;width:84px;height:1px;background:#a05bc4"></div>
<div class="a" style="left:105.4px;top:304.4px;width:128.1px;height:60px;background:#fff;border-radius:2px"></div>
<div class="t" style="left:113.70px;top:313.4px;font-size:7.0px;color:#666;">Média de Tarefas por Negociação</div>
<div class="t" style="left:114.00px;top:322.4px;font-size:13.3px;color:#1c1c1c;">3,44</div>
<svg style="left:114.4px;top:338.0px;" width="3" height="5" viewBox="0 0 3 5"><path d="M0.8 4.4h1.2V2.2h0.8L1.4 0.5 0 2.2h0.8z" fill="#25b552"/></svg>
<div class="t" style="left:120.00px;top:338.4px;font-size:6.35px;color:#25b552;">3.3%</div>
<svg style="left:0;top:0" width="714" height="534"><path d="M128 359.7L128 353.9L212 352.5L212 359.7z" fill="#a9c4dd"/><path d="M128 353.9L212 352.5" stroke="#3d84c4" stroke-width="0.8" fill="none"/></svg>
<div class="a" style="left:105.4px;top:385.2px;width:128.1px;height:60px;background:#fff;border-radius:2px"></div>
<div class="t" style="left:113.70px;top:394.2px;font-size:7.0px;color:#666;">Cobertura das Negociações</div>
<div class="t" style="left:114.00px;top:403.2px;font-size:13.3px;color:#1c1c1c;">88,62%</div>
<svg style="left:114.4px;top:418.8px;" width="3" height="5" viewBox="0 0 3 5"><path d="M0.8 4.4h1.2V2.2h0.8L1.4 0.5 0 2.2h0.8z" fill="#25b552"/></svg>
<div class="t" style="left:120.00px;top:419.2px;font-size:6.35px;color:#25b552;">2.3%</div>
<svg style="left:0;top:0" width="714" height="534"><path d="M128 440.4L128 434L212 433L212 440.4z" fill="#b5d9ec"/><path d="M128 434L212 433" stroke="#2a9ad6" stroke-width="0.8" fill="none"/></svg>
<div class="a" style="left:430.9px;top:453.6px;width:128px;height:16.2px;background:#380594;border-radius:1px"></div>
<div class="t" style="left:494.90px;top:460px;font-size:5.95px;color:#fff;transform:translateX(-50%);">Teste a Kondado Gratuitamente</div>
<div class="t" style="left:572.80px;top:459px;font-size:6.0px;color:#6e6e6e;">© kondado.com.br 2024 - v240319</div>
<!-- charts -->
<div class="a" style="left:253.6px;top:145px;width:222.6px;height:138px;background:#fff;border-radius:2px"></div>
<div class="a" style="left:495.7px;top:145px;width:173.7px;height:138px;background:#fff;border-radius:2px"></div>
<div class="a" style="left:253.6px;top:304.6px;width:222.6px;height:140.2px;background:#fff;border-radius:2px"></div>
<div class="a" style="left:495.7px;top:304.6px;width:173.7px;height:140.2px;background:#fff;border-radius:2px"></div>
<svg style="left:0;top:0" width="714" height="534" font-family="Liberation Sans, sans-serif"><defs><clipPath id="cc"><rect x="253.6" y="145" width="222.6" height="138"/><rect x="495.7" y="145" width="173.7" height="138"/><rect x="253.6" y="304.6" width="222.6" height="140.2"/><rect x="495.7" y="304.6" width="173.7" height="140.2"/></clipPath></defs><g clip-path="url(#cc)"><text x="364.90" y="154.60" font-size="6.0" fill="#1c1c1c" text-anchor="middle">Tarefas Concluídas por Tipo</text><path d="M279 167.60H423.5" stroke="#e6e6e6" stroke-width="0.8"/><path d="M279 178.84H423.5" stroke="#e6e6e6" stroke-width="0.8"/><path d="M279 190.08H423.5" stroke="#e6e6e6" stroke-width="0.8"/><path d="M279 201.32H423.5" stroke="#e6e6e6" stroke-width="0.8"/><path d="M279 212.56H423.5" stroke="#e6e6e6" stroke-width="0.8"/><path d="M279 223.80H423.5" stroke="#e6e6e6" stroke-width="0.8"/><path d="M279 235.04H423.5" stroke="#e6e6e6" stroke-width="0.8"/><path d="M279 246.28H423.5" stroke="#e6e6e6" stroke-width="0.8"/><text x="273.20" y="169.80" font-size="6.2" fill="#262626" text-anchor="end">200</text><text x="273.20" y="192.30" font-size="6.2" fill="#262626" text-anchor="end">150</text><text x="273.20" y="214.70" font-size="6.2" fill="#262626" text-anchor="end">100</text><text x="273.20" y="237.20" font-size="6.2" fill="#262626" text-anchor="end">50</text><text x="273.20" y="259.70" font-size="6.2" fill="#262626" text-anchor="end">0</text><rect x="280.35" y="249.45" width="8.20" height="8.03" fill="#05a1e4"/><rect x="280.35" y="240.28" width="8.20" height="9.17" fill="#7b0c9c"/><path d="M280.35 249.45h8.2" stroke="rgba(255,255,255,.35)" stroke-width="0.35"/><rect x="280.35" y="233.59" width="8.20" height="6.69" fill="#380594"/><path d="M280.35 240.28h8.2" stroke="rgba(255,255,255,.35)" stroke-width="0.35"/><rect x="280.35" y="228.43" width="8.20" height="5.16" fill="#000000"/><path d="M280.35 233.59h8.2" stroke="rgba(255,255,255,.35)" stroke-width="0.35"/><rect x="280.35" y="227.47" width="8.20" height="0.96" fill="#ff1379"/><path d="M280.35 228.43h8.2" stroke="rgba(255,255,255,.35)" stroke-width="0.35"/><rect x="280.35" y="226.51" width="8.20" height="0.96" fill="#10c440"/><path d="M280.35 227.47h8.2" stroke="rgba(255,255,255,.35)" stroke-width="0.35"/><rect x="280.35" y="225.56" width="8.20" height="0.96" fill="#0563c1"/><path d="M280.35 226.51h8.2" stroke="rgba(255,255,255,.35)" stroke-width="0.35"/><rect x="290.68" y="245.63" width="8.20" height="11.85" fill="#05a1e4"/><rect x="290.68" y="236.45" width="8.20" height="9.17" fill="#7b0c9c"/><path d="M290.68 245.63h8.2" stroke="rgba(255,255,255,.35)" stroke-width="0.35"/><rect x="290.68" y="228.81" width="8.20" height="7.65" fill="#380594"/><path d="M290.68 236.45h8.2" stroke="rgba(255,255,255,.35)" stroke-width="0.35"/><rect x="290.68" y="222.69" width="8.20" height="6.12" fill="#000000"/><path d="M290.68 228.81h8.2" stroke="rgba(255,255,255,.35)" stroke-width="0.35"/><rect x="290.68" y="220.78" width="8.20" height="1.91" fill="#ff1379"/><path d="M290.68 222.69h8.2" stroke="rgba(255,255,255,.35)" stroke-width="0.35"/><rect x="290.68" y="219.25" width="8.20" height="1.53" fill="#10c440"/><path d="M290.68 220.78h8.2" stroke="rgba(255,255,255,.35)" stroke-width="0.35"/><rect x="290.68" y="216.96" width="8.20" height="2.29" fill="#0563c1"/><path d="M290.68 219.25h8.2" stroke="rgba(255,255,255,.35)" stroke-width="0.35"/><rect x="301.01" y="244.48" width="8.20" height="13.00" fill="#05a1e4"/><rect x="301.01" y="232.25" width="8.20" height="12.23" fill="#7b0c9c"/><path d="M301.01 244.48h8.2" stroke="rgba(255,255,255,.35)" stroke-width="0.35"/><rect x="301.01" y="224.60" width="8.20" height="7.65" fill="#380594"/><path d="M301.01 232.25h8.2" stroke="rgba(255,255,255,.35)" stroke-width="0.35"/><rect x="301.01" y="221.54" width="8.20" height="3.06" fill="#000000"/><path d="M301.01 224.60h8.2" stroke="rgba(255,255,255,.35)" stroke-width="0.35"/><rect x="301.01" y="218.49" width="8.20" height="3.06" fill="#ff1379"/><path d="M301.01 221.54h8.2" stroke="rgba(255,255,255,.35)" stroke-width="0.35"/><rect x="301.01" y="217.34" width="8.20" height="1.15" fill="#10c440"/><path d="M301.01 218.49h8.2" stroke="rgba(255,255,255,.35)" stroke-width="0.35"/><rect x="301.01" y="215.81" width="8.20" height="1.53" fill="#0563c1"/><path d="M301.01 217.34h8.2" stroke="rgba(255,255,255,.35)" stroke-width="0.35"/><rect x="311.34" y="250.60" width="8.20" height="6.88" fill="#05a1e4"/><rect x="311.34" y="241.80" width="8.20" height="8.79" fill="#7b0c9c"/><path d="M311.34 250.60h8.2" stroke="rgba(255,255,255,.35)" stroke-width="0.35"/><rect x="311.34" y="234.54" width="8.20" height="7.26" fill="#380594"/><path d="M311.34 241.80h8.2" stroke="rgba(255,255,255,.35)" stroke-width="0.35"/><rect x="311.34" y="230.72" width="8.20" height="3.82" fill="#000000"/><path d="M311.34 234.54h8.2" stroke="rgba(255,255,255,.35)" stroke-width="0.35"/><rect x="311.34" y="229.19" width="8.20" height="1.53" fill="#ff1379"/><path d="M311.34 230.72h8.2" stroke="rgba(255,255,255,.35)" stroke-width="0.35"/><rect x="311.34" y="227.28" width="8.20" height="1.91" fill="#10c440"/><path d="M311.34 229.19h8.2" stroke="rgba(255,255,255,.35)" stroke-width="0.35"/><rect x="311.34" y="226.13" width="8.20" height="1.15" fill="#0563c1"/><path d="M311.34 227.28h8.2" stroke="rgba(255,255,255,.35)" stroke-width="0.35"/><rect x="321.67" y="247.54" width="8.20" height="9.94" fill="#05a1e4"/><rect x="321.67" y="236.07" width="8.20" height="11.47" fill="#7b0c9c"/><path d="M321.67 247.54h8.2" stroke="rgba(255,255,255,.35)" stroke-width="0.35"/><rect x="321.67" y="226.51" width="8.20" height="9.56" fill="#380594"/><path d="M321.67 236.07h8.2" stroke="rgba(255,255,255,.35)" stroke-width="0.35"/><rect x="321.67" y="221.54" width="8.20" height="4.97" fill="#000000"/><path d="M321.67 226.51h8.2" stroke="rgba(255,255,255,.35)" stroke-width="0.35"/><rect x="321.67" y="220.40" width="8.20" height="1.15" fill="#ff1379"/><path d="M321.67 221.54h8.2" stroke="rgba(255,255,255,.35)" stroke-width="0.35"/><rect x="321.67" y="217.34" width="8.20" height="3.06" fill="#10c440"/><path d="M321.67 220.40h8.2" stroke="rgba(255,255,255,.35)" stroke-width="0.35"/><rect x="321.67" y="215.81" width="8.20" height="1.53" fill="#0563c1"/><path d="M321.67 217.34h8.2" stroke="rgba(255,255,255,.35)" stroke-width="0.35"/><rect x="332.00" y="245.63" width="8.20" height="11.85" fill="#05a1e4"/><rect x="332.00" y="235.50" width="8.20" height="10.13" fill="#7b0c9c"/><path d="M332.00 245.63h8.2" stroke="rgba(255,255,255,.35)" stroke-width="0.35"/><rect x="332.00" y="228.81" width="8.20" height="6.69" fill="#380594"/><path d="M332.00 235.50h8.2" stroke="rgba(255,255,255,.35)" stroke-width="0.35"/><rect x="332.00" y="221.16" width="8.20" height="7.65" fill="#000000"/><path d="M332.00 228.81h8.2" stroke="rgba(255,255,255,.35)" stroke-width="0.35"/><rect x="332.00" y="220.40" width="8.20" height="0.76" fill="#ff1379"/><path d="M332.00 221.16h8.2" stroke="rgba(255,255,255,.35)" stroke-width="0.35"/><rect x="332.00" y="219.63" width="8.20" height="0.76" fill="#10c440"/><path d="M332.00 220.40h8.2" stroke="rgba(255,255,255,.35)" stroke-width="0.35"/><rect x="332.00" y="217.34" width="8.20" height="2.29" fill="#0563c1"/><path d="M332.00 219.63h8.2" stroke="rgba(255,255,255,.35)" stroke-width="0.35"/><rect x="342.33" y="245.05" width="8.20" height="12.42" fill="#05a1e4"/><rect x="342.33" y="229.76" width="8.20" height="15.29" fill="#7b0c9c"/><path d="M342.33 245.05h8.2" stroke="rgba(255,255,255,.35)" stroke-width="0.35"/><rect x="342.33" y="222.12" width="8.20" height="7.65" fill="#380594"/><path d="M342.33 229.76h8.2" stroke="rgba(255,255,255,.35)" stroke-width="0.35"/><rect x="342.33" y="216.00" width="8.20" height="6.12" fill="#000000"/><path d="M342.33 222.12h8.2" stroke="rgba(255,255,255,.35)" stroke-width="0.35"/><rect x="342.33" y="214.28" width="8.20" height="1.72" fill="#ff1379"/><path d="M342.33 216.00h8.2" stroke="rgba(255,255,255,.35)" stroke-width="0.35"/><rect x="342.33" y="211.99" width="8.20" height="2.29" fill="#10c440"/><path d="M342.33 214.28h8.2" stroke="rgba(255,255,255,.35)" stroke-width="0.35"/><rect x="342.33" y="210.65" width="8.20" height="1.34" fill="#0563c1"/><path d="M342.33 211.99h8.2" stroke="rgba(255,255,255,.35)" stroke-width="0.35"/><rect x="352.66" y="248.30" width="8.20" height="9.17" fill="#05a1e4"/><rect x="352.66" y="234.92" width="8.20" height="13.38" fill="#7b0c9c"/><path d="M352.66 248.30h8.2" stroke="rgba(255,255,255,.35)" stroke-width="0.35"/><rect x="352.66" y="224.03" width="8.20" height="10.89" fill="#380594"/><path d="M352.66 234.92h8.2" stroke="rgba(255,255,255,.35)" stroke-width="0.35"/><rect x="352.66" y="217.91" width="8.20" height="6.12" fill="#000000"/><path d="M352.66 224.03h8.2" stroke="rgba(255,255,255,.35)" stroke-width="0.35"/><rect x="352.66" y="216.57" width="8.20" height="1.34" fill="#ff1379"/><path d="M352.66 217.91h8.2" stroke="rgba(255,255,255,.35)" stroke-width="0.35"/><rect x="352.66" y="215.43" width="8.20" height="1.15" fill="#10c440"/><path d="M352.66 216.57h8.2" stroke="rgba(255,255,255,.35)" stroke-width="0.35"/><rect x="352.66" y="214.47" width="8.20" height="0.96" fill="#0563c1"/><path d="M352.66 215.43h8.2" stroke="rgba(255,255,255,.35)" stroke-width="0.35"/><rect x="362.99" y="246.58" width="8.20" height="10.89" fill="#05a1e4"/><rect x="362.99" y="233.59" width="8.20" height="13.00" fill="#7b0c9c"/><path d="M362.99 246.58h8.2" stroke="rgba(255,255,255,.35)" stroke-width="0.35"/><rect x="362.99" y="226.51" width="8.20" height="7.07" fill="#380594"/><path d="M362.99 233.59h8.2" stroke="rgba(255,255,255,.35)" stroke-width="0.35"/><rect x="362.99" y="220.21" width="8.20" height="6.31" fill="#000000"/><path d="M362.99 226.51h8.2" stroke="rgba(255,255,255,.35)" stroke-width="0.35"/><rect x="362.99" y="216.96" width="8.20" height="3.25" fill="#ff1379"/><path d="M362.99 220.21h8.2" stroke="rgba(255,255,255,.35)" stroke-width="0.35"/><rect x="362.99" y="215.43" width="8.20" height="1.53" fill="#10c440"/><path d="M362.99 216.96h8.2" stroke="rgba(255,255,255,.35)" stroke-width="0.35"/><rect x="362.99" y="214.47" width="8.20" height="0.96" fill="#0563c1"/><path d="M362.99 215.43h8.2" stroke="rgba(255,255,255,.35)" stroke-width="0.35"/><rect x="373.32" y="246.39" width="8.20" height="11.09" fill="#05a1e4"/><rect x="373.32" y="233.01" width="8.20" height="13.38" fill="#7b0c9c"/><path d="M373.32 246.39h8.2" stroke="rgba(255,255,255,.35)" stroke-width="0.35"/><rect x="373.32" y="225.94" width="8.20" height="7.07" fill="#380594"/><path d="M373.32 233.01h8.2" stroke="rgba(255,255,255,.35)" stroke-width="0.35"/><rect x="373.32" y="218.87" width="8.20" height="7.07" fill="#000000"/><path d="M373.32 225.94h8.2" stroke="rgba(255,255,255,.35)" stroke-width="0.35"/><rect x="373.32" y="217.34" width="8.20" height="1.53" fill="#ff1379"/><path d="M373.32 218.87h8.2" stroke="rgba(255,255,255,.35)" stroke-width="0.35"/><rect x="373.32" y="216.57" width="8.20" height="0.76" fill="#10c440"/><path d="M373.32 217.34h8.2" stroke="rgba(255,255,255,.35)" stroke-width="0.35"/><rect x="373.32" y="215.05" width="8.20" height="1.53" fill="#0563c1"/><path d="M373.32 216.57h8.2" stroke="rgba(255,255,255,.35)" stroke-width="0.35"/><rect x="383.65" y="242.19" width="8.20" height="15.29" fill="#05a1e4"/><rect x="383.65" y="232.25" width="8.20" height="9.94" fill="#7b0c9c"/><path d="M383.65 242.19h8.2" stroke="rgba(255,255,255,.35)" stroke-width="0.35"/><rect x="383.65" y="224.60" width="8.20" height="7.65" fill="#380594"/><path d="M383.65 232.25h8.2" stroke="rgba(255,255,255,.35)" stroke-width="0.35"/><rect x="383.65" y="219.25" width="8.20" height="5.35" fill="#000000"/><path d="M383.65 224.60h8.2" stroke="rgba(255,255,255,.35)" stroke-width="0.35"/><rect x="383.65" y="216.96" width="8.20" height="2.29" fill="#ff1379"/><path d="M383.65 219.25h8.2" stroke="rgba(255,255,255,.35)" stroke-width="0.35"/><rect x="383.65" y="213.90" width="8.20" height="3.06" fill="#10c440"/><path d="M383.65 216.96h8.2" stroke="rgba(255,255,255,.35)" stroke-width="0.35"/><rect x="383.65" y="211.22" width="8.20" height="2.68" fill="#0563c1"/><path d="M383.65 213.90h8.2" stroke="rgba(255,255,255,.35)" stroke-width="0.35"/><rect x="393.98" y="240.28" width="8.20" height="17.20" fill="#05a1e4"/><rect x="393.98" y="228.23" width="8.20" height="12.04" fill="#7b0c9c"/><path d="M393.98 240.28h8.2" stroke="rgba(255,255,255,.35)" stroke-width="0.35"/><rect x="393.98" y="216.00" width="8.20" height="12.23" fill="#380594"/><path d="M393.98 228.23h8.2" stroke="rgba(255,255,255,.35)" stroke-width="0.35"/><rect x="393.98" y="209.69" width="8.20" height="6.31" fill="#000000"/><path d="M393.98 216.00h8.2" stroke="rgba(255,255,255,.35)" stroke-width="0.35"/><rect x="393.98" y="205.87" width="8.20" height="3.82" fill="#ff1379"/><path d="M393.98 209.69h8.2" stroke="rgba(255,255,255,.35)" stroke-width="0.35"/><rect x="393.98" y="203.58" width="8.20" height="2.29" fill="#10c440"/><path d="M393.98 205.87h8.2" stroke="rgba(255,255,255,.35)" stroke-width="0.35"/><rect x="393.98" y="200.33" width="8.20" height="3.25" fill="#0563c1"/><path d="M393.98 203.58h8.2" stroke="rgba(255,255,255,.35)" stroke-width="0.35"/><rect x="404.31" y="241.23" width="8.20" height="16.25" fill="#05a1e4"/><rect x="404.31" y="226.51" width="8.20" height="14.72" fill="#7b0c9c"/><path d="M404.31 241.23h8.2" stroke="rgba(255,255,255,.35)" stroke-width="0.35"/><rect x="404.31" y="216.00" width="8.20" height="10.51" fill="#380594"/><path d="M404.31 226.51h8.2" stroke="rgba(255,255,255,.35)" stroke-width="0.35"/><rect x="404.31" y="209.69" width="8.20" height="6.31" fill="#000000"/><path d="M404.31 216.00h8.2" stroke="rgba(255,255,255,.35)" stroke-width="0.35"/><rect x="404.31" y="207.40" width="8.20" height="2.29" fill="#ff1379"/><path d="M404.31 209.69h8.2" stroke="rgba(255,255,255,.35)" stroke-width="0.35"/><rect x="404.31" y="206.64" width="8.20" height="0.76" fill="#10c440"/><path d="M404.31 207.40h8.2" stroke="rgba(255,255,255,.35)" stroke-width="0.35"/><rect x="404.31" y="204.53" width="8.20" height="2.10" fill="#0563c1"/><path d="M404.31 206.64h8.2" stroke="rgba(255,255,255,.35)" stroke-width="0.35"/><rect x="414.64" y="228.81" width="8.20" height="28.67" fill="#05a1e4"/><rect x="414.64" y="213.52" width="8.20" height="15.29" fill="#7b0c9c"/><path d="M414.64 228.81h8.2" stroke="rgba(255,255,255,.35)" stroke-width="0.35"/><rect x="414.64" y="201.67" width="8.20" height="11.85" fill="#380594"/><path d="M414.64 213.52h8.2" stroke="rgba(255,255,255,.35)" stroke-width="0.35"/><rect x="414.64" y="189.63" width="8.20" height="12.04" fill="#000000"/><path d="M414.64 201.67h8.2" stroke="rgba(255,255,255,.35)" stroke-width="0.35"/><rect x="414.64" y="186.38" width="8.20" height="3.25" fill="#ff1379"/><path d="M414.64 189.63h8.2" stroke="rgba(255,255,255,.35)" stroke-width="0.35"/><rect x="414.64" y="183.70" width="8.20" height="2.68" fill="#10c440"/><path d="M414.64 186.38h8.2" stroke="rgba(255,255,255,.35)" stroke-width="0.35"/><rect x="414.64" y="181.02" width="8.20" height="2.68" fill="#0563c1"/><path d="M414.64 183.70h8.2" stroke="rgba(255,255,255,.35)" stroke-width="0.35"/><path d="M279 257.6H423.5" stroke="#777" stroke-width="0.6"/><rect x="429.70" y="167.30" width="10.50" height="5.20" fill="#0563c1"/><text x="442.60" y="171.90" font-size="5.55" fill="#222" text-anchor="start">task</text><rect x="429.70" y="176.33" width="10.50" height="5.20" fill="#10c440"/><text x="442.60" y="180.93" font-size="5.55" fill="#222" text-anchor="start">lunch</text><rect x="429.70" y="185.36" width="10.50" height="5.20" fill="#ff1379"/><text x="442.60" y="189.96" font-size="5.55" fill="#222" text-anchor="start">visit</text><rect x="429.70" y="194.39" width="10.50" height="5.20" fill="#000"/><text x="442.60" y="198.99" font-size="5.55" fill="#222" text-anchor="start">email</text><rect x="429.70" y="203.42" width="10.50" height="5.20" fill="#380594"/><text x="442.60" y="208.02" font-size="5.55" fill="#222" text-anchor="start">whatsapp</text><rect x="429.70" y="212.45" width="10.50" height="5.20" fill="#7b0c9c"/><text x="442.60" y="217.05" font-size="5.55" fill="#222" text-anchor="start">meeting</text><rect x="429.70" y="221.48" width="10.50" height="5.20" fill="#05a1e4"/><text x="442.60" y="226.08" font-size="5.55" fill="#222" text-anchor="start">call</text><text x="284.75" y="263.80" font-size="5.55" fill="#2a2a2a" text-anchor="end" transform="rotate(-30 284.75 263.80)">1 de abr. de...</text><text x="305.41" y="263.80" font-size="5.55" fill="#2a2a2a" text-anchor="end" transform="rotate(-30 305.41 263.80)">15 de abr. d...</text><text x="326.07" y="263.80" font-size="5.55" fill="#2a2a2a" text-anchor="end" transform="rotate(-30 326.07 263.80)">29 de abr. d...</text><text x="346.73" y="263.80" font-size="5.55" fill="#2a2a2a" text-anchor="end" transform="rotate(-30 346.73 263.80)">13 de mai....</text><text x="367.39" y="263.80" font-size="5.55" fill="#2a2a2a" text-anchor="end" transform="rotate(-30 367.39 263.80)">27 de mai....</text><text x="388.05" y="263.80" font-size="5.55" fill="#2a2a2a" text-anchor="end" transform="rotate(-30 388.05 263.80)">10 de jun. d...</text><text x="408.71" y="263.80" font-size="5.55" fill="#2a2a2a" text-anchor="end" transform="rotate(-30 408.71 263.80)">24 de jun. d...</text><path d="M521.4 158H531.9" stroke="#7b0c9c" stroke-width="1"/><circle cx="526.6" cy="158" r="1.6" fill="#7b0c9c"/><text x="534.60" y="160.00" font-size="5.45" fill="#222" text-anchor="start">Tempo de Resposta (Dias)</text><text x="515.30" y="171.70" font-size="6.2" fill="#262626" text-anchor="end">30</text><text x="515.30" y="193.50" font-size="6.2" fill="#262626" text-anchor="end">20</text><text x="515.30" y="215.10" font-size="6.2" fill="#262626" text-anchor="end">10</text><text x="515.30" y="237.10" font-size="6.2" fill="#262626" text-anchor="end">0</text><text x="515.30" y="258.50" font-size="6.2" fill="#262626" text-anchor="end">-10</text><path d="M521.4 169.5V257" stroke="#555" stroke-width="0.8"/><path d="M521.4 234.9H657.4" stroke="#9c9c9c" stroke-width="1.3"/><path d="M521.38 181.51V185.61" stroke="#cfcfcf" stroke-width="0.6"/><text x="521.38" y="180.61" font-size="5.9" fill="#a35fbd" text-anchor="middle">22</text><path d="M531.87 206.24V210.34" stroke="#cfcfcf" stroke-width="0.6"/><text x="531.87" y="205.34" font-size="5.9" fill="#a35fbd" text-anchor="middle">11</text><path d="M542.35 177.94V182.04" stroke="#cfcfcf" stroke-width="0.6"/><text x="542.35" y="177.04" font-size="5.9" fill="#a35fbd" text-anchor="middle">23</text><path d="M552.62 184.44V188.54" stroke="#cfcfcf" stroke-width="0.6"/><text x="552.62" y="183.54" font-size="5.9" fill="#a35fbd" text-anchor="middle">20</text><path d="M563.10 199.54V203.64" stroke="#cfcfcf" stroke-width="0.6"/><text x="563.10" y="198.64" font-size="5.9" fill="#a35fbd" text-anchor="middle">14</text><path d="M573.38 202.68V206.78" stroke="#cfcfcf" stroke-width="0.6"/><text x="573.38" y="201.78" font-size="5.9" fill="#a35fbd" text-anchor="middle">12</text><path d="M583.86 212.32V216.42" stroke="#cfcfcf" stroke-width="0.6"/><text x="583.86" y="211.42" font-size="5.9" fill="#a35fbd" text-anchor="middle">8</text><path d="M594.34 214.84V218.94" stroke="#cfcfcf" stroke-width="0.6"/><text x="594.34" y="213.94" font-size="5.9" fill="#a35fbd" text-anchor="middle">7</text><path d="M604.61 216.94V221.04" stroke="#cfcfcf" stroke-width="0.6"/><text x="604.61" y="216.04" font-size="5.9" fill="#a35fbd" text-anchor="middle">6</text><path d="M615.09 220.71V224.81" stroke="#cfcfcf" stroke-width="0.6"/><text x="615.09" y="219.81" font-size="5.9" fill="#a35fbd" text-anchor="middle">4</text><path d="M625.37 216.52V220.62" stroke="#cfcfcf" stroke-width="0.6"/><text x="625.37" y="215.62" font-size="5.9" fill="#a35fbd" text-anchor="middle">6</text><path d="M635.85 221.13V225.23" stroke="#cfcfcf" stroke-width="0.6"/><text x="635.85" y="220.23" font-size="5.9" fill="#a35fbd" text-anchor="middle">4</text><path d="M646.33 223.65V227.75" stroke="#cfcfcf" stroke-width="0.6"/><text x="646.33" y="222.75" font-size="5.9" fill="#a35fbd" text-anchor="middle">3</text><path d="M656.60 229.31V233.41" stroke="#cfcfcf" stroke-width="0.6"/><text x="656.60" y="228.41" font-size="5.9" fill="#a35fbd" text-anchor="middle">-0</text><path d="M521.38 187.11C523.48 192.05 527.67 212.56 531.87 211.84C536.06 211.13 538.20 187.90 542.35 183.54C546.50 179.18 548.47 185.72 552.62 190.04C556.77 194.36 558.95 201.49 563.10 205.14C567.25 208.78 569.22 205.72 573.38 208.28C577.53 210.84 579.66 215.49 583.86 217.92C588.05 220.36 590.19 219.52 594.34 220.44C598.49 221.36 600.46 221.36 604.61 222.54C608.76 223.71 610.94 226.39 615.09 226.31C619.25 226.23 621.22 222.03 625.37 222.12C629.52 222.20 631.66 225.30 635.85 226.73C640.04 228.16 642.18 227.61 646.33 229.25C650.48 230.88 654.55 233.77 656.60 234.91" fill="none" stroke="#7b0c9c" stroke-width="1.35"/><circle cx="521.38" cy="187.11" r="1.9" fill="#7b0c9c"/><circle cx="531.87" cy="211.84" r="1.9" fill="#7b0c9c"/><circle cx="542.35" cy="183.54" r="1.9" fill="#7b0c9c"/><circle cx="552.62" cy="190.04" r="1.9" fill="#7b0c9c"/><circle cx="563.10" cy="205.14" r="1.9" fill="#7b0c9c"/><circle cx="573.38" cy="208.28" r="1.9" fill="#7b0c9c"/><circle cx="583.86" cy="217.92" r="1.9" fill="#7b0c9c"/><circle cx="594.34" cy="220.44" r="1.9" fill="#7b0c9c"/><circle cx="604.61" cy="222.54" r="1.9" fill="#7b0c9c"/><circle cx="615.09" cy="226.31" r="1.9" fill="#7b0c9c"/><circle cx="625.37" cy="222.12" r="1.9" fill="#7b0c9c"/><circle cx="635.85" cy="226.73" r="1.9" fill="#7b0c9c"/><circle cx="646.33" cy="229.25" r="1.9" fill="#7b0c9c"/><circle cx="656.60" cy="234.91" r="1.9" fill="#7b0c9c"/><text x="521.68" y="263.80" font-size="5.55" fill="#2a2a2a" text-anchor="end" transform="rotate(-30 521.68 263.80)">1 de abr. de...</text><text x="552.92" y="263.80" font-size="5.55" fill="#2a2a2a" text-anchor="end" transform="rotate(-30 552.92 263.80)">22 de abr. d...</text><text x="584.16" y="263.80" font-size="5.55" fill="#2a2a2a" text-anchor="end" transform="rotate(-30 584.16 263.80)">13 de mai....</text><text x="615.39" y="263.80" font-size="5.55" fill="#2a2a2a" text-anchor="end" transform="rotate(-30 615.39 263.80)">3 de jun. de...</text><text x="646.63" y="263.80" font-size="5.55" fill="#2a2a2a" text-anchor="end" transform="rotate(-30 646.63 263.80)">24 de jun. d...</text><text x="364.90" y="314.80" font-size="6.0" fill="#1c1c1c" text-anchor="middle">Cobertura das Negociações</text><path d="M279 326H289.5" stroke="#0563c1" stroke-width="1"/><circle cx="284.2" cy="326" r="1.6" fill="#0563c1"/><text x="291.00" y="327.90" font-size="5.05" fill="#222" text-anchor="start">Tarefas p/ Negoc.</text><rect x="339.00" y="323.40" width="9.90" height="5.20" fill="#05a1e4"/><text x="351.00" y="327.90" font-size="5.1" fill="#222" text-anchor="start">Negoc. c/ Tarefas</text><rect x="398.80" y="323.40" width="9.90" height="5.20" fill="#380594"/><text x="410.80" y="327.90" font-size="5.1" fill="#222" text-anchor="start">Negoc. s/ Tarefas</text><text x="273.20" y="339.80" font-size="6.2" fill="#262626" text-anchor="end">60</text><text x="273.20" y="367.20" font-size="6.2" fill="#262626" text-anchor="end">40</text><text x="273.20" y="394.50" font-size="6.2" fill="#262626" text-anchor="end">20</text><text x="273.20" y="421.70" font-size="6.2" fill="#262626" text-anchor="end">0</text><text x="455.80" y="339.80" font-size="6.15" fill="#262626" text-anchor="start">6,00</text><text x="455.80" y="367.20" font-size="6.15" fill="#262626" text-anchor="start">4,00</text><text x="455.80" y="394.50" font-size="6.15" fill="#262626" text-anchor="start">2,00</text><text x="455.80" y="421.70" font-size="6.15" fill="#262626" text-anchor="start">0,00</text><rect x="285.84" y="381.49" width="9.80" height="6.68" fill="#380594"/><rect x="285.84" y="388.18" width="9.80" height="31.12" fill="#05a1e4"/><path d="M285.84 388.18h9.8" stroke="rgba(255,255,255,.4)" stroke-width="0.4"/><rect x="297.65" y="371.92" width="9.80" height="1.08" fill="#380594"/><rect x="297.65" y="373.00" width="9.80" height="46.30" fill="#05a1e4"/><path d="M297.65 373.00h9.8" stroke="rgba(255,255,255,.4)" stroke-width="0.4"/><rect x="309.47" y="367.94" width="9.80" height="9.03" fill="#380594"/><rect x="309.47" y="376.97" width="9.80" height="42.33" fill="#05a1e4"/><path d="M309.47 376.97h9.8" stroke="rgba(255,255,255,.4)" stroke-width="0.4"/><rect x="321.28" y="367.94" width="9.80" height="8.13" fill="#380594"/><rect x="321.28" y="376.07" width="9.80" height="43.23" fill="#05a1e4"/><path d="M321.28 376.07h9.8" stroke="rgba(255,255,255,.4)" stroke-width="0.4"/><rect x="333.09" y="348.79" width="9.80" height="11.56" fill="#380594"/><rect x="333.09" y="360.35" width="9.80" height="58.95" fill="#05a1e4"/><path d="M333.09 360.35h9.8" stroke="rgba(255,255,255,.4)" stroke-width="0.4"/><rect x="344.90" y="377.52" width="9.80" height="4.88" fill="#380594"/><rect x="344.90" y="382.39" width="9.80" height="36.91" fill="#05a1e4"/><path d="M344.90 382.39h9.8" stroke="rgba(255,255,255,.4)" stroke-width="0.4"/><rect x="356.72" y="362.52" width="9.80" height="3.61" fill="#380594"/><rect x="356.72" y="366.13" width="9.80" height="53.17" fill="#05a1e4"/><path d="M356.72 366.13h9.8" stroke="rgba(255,255,255,.4)" stroke-width="0.4"/><rect x="368.53" y="362.52" width="9.80" height="6.32" fill="#380594"/><rect x="368.53" y="368.84" width="9.80" height="50.46" fill="#05a1e4"/><path d="M368.53 368.84h9.8" stroke="rgba(255,255,255,.4)" stroke-width="0.4"/><rect x="380.34" y="375.17" width="9.80" height="4.88" fill="#380594"/><rect x="380.34" y="380.05" width="9.80" height="39.25" fill="#05a1e4"/><path d="M380.34 380.05h9.8" stroke="rgba(255,255,255,.4)" stroke-width="0.4"/><rect x="392.16" y="373.36" width="9.80" height="2.71" fill="#380594"/><rect x="392.16" y="376.07" width="9.80" height="43.23" fill="#05a1e4"/><path d="M392.16 376.07h9.8" stroke="rgba(255,255,255,.4)" stroke-width="0.4"/><rect x="403.97" y="356.20" width="9.80" height="5.96" fill="#380594"/><rect x="403.97" y="362.16" width="9.80" height="57.14" fill="#05a1e4"/><path d="M403.97 362.16h9.8" stroke="rgba(255,255,255,.4)" stroke-width="0.4"/><rect x="415.78" y="371.19" width="9.80" height="4.88" fill="#380594"/><rect x="415.78" y="376.07" width="9.80" height="43.23" fill="#05a1e4"/><path d="M415.78 376.07h9.8" stroke="rgba(255,255,255,.4)" stroke-width="0.4"/><rect x="427.60" y="354.39" width="9.80" height="5.96" fill="#380594"/><rect x="427.60" y="360.35" width="9.80" height="58.95" fill="#05a1e4"/><path d="M427.60 360.35h9.8" stroke="rgba(255,255,255,.4)" stroke-width="0.4"/><rect x="439.41" y="376.07" width="9.80" height="0.54" fill="#380594"/><rect x="439.41" y="376.61" width="9.80" height="42.69" fill="#05a1e4"/><path d="M439.41 376.61h9.8" stroke="rgba(255,255,255,.4)" stroke-width="0.4"/><path d="M279 419.4H450" stroke="#444" stroke-width="0.8"/><path d="M290.90 369.21C293.21 368.81 297.76 365.12 302.46 367.22C307.16 369.31 309.65 375.75 314.39 379.68C319.12 383.62 321.43 388.10 326.13 386.91C330.83 385.72 333.18 376.54 337.87 373.72C342.57 370.90 344.92 373.69 349.62 372.82C354.31 371.95 356.66 368.81 361.36 369.39C366.06 369.96 368.33 376.25 373.10 375.71C377.87 375.17 380.44 367.90 385.21 366.68C389.98 365.45 392.25 368.23 396.95 369.57C401.65 370.90 404.00 374.88 408.69 373.36C413.39 371.84 415.74 361.36 420.44 361.98C425.14 362.59 427.48 375.31 432.18 376.43C436.88 377.55 441.58 369.35 443.93 367.58" fill="none" stroke="#0563c1" stroke-width="1.2"/><circle cx="290.90" cy="369.21" r="1.7" fill="#0563c1"/><circle cx="302.46" cy="367.22" r="1.7" fill="#0563c1"/><circle cx="314.39" cy="379.68" r="1.7" fill="#0563c1"/><circle cx="326.13" cy="386.91" r="1.7" fill="#0563c1"/><circle cx="337.87" cy="373.72" r="1.7" fill="#0563c1"/><circle cx="349.62" cy="372.82" r="1.7" fill="#0563c1"/><circle cx="361.36" cy="369.39" r="1.7" fill="#0563c1"/><circle cx="373.10" cy="375.71" r="1.7" fill="#0563c1"/><circle cx="385.21" cy="366.68" r="1.7" fill="#0563c1"/><circle cx="396.95" cy="369.57" r="1.7" fill="#0563c1"/><circle cx="408.69" cy="373.36" r="1.7" fill="#0563c1"/><circle cx="420.44" cy="361.98" r="1.7" fill="#0563c1"/><circle cx="432.18" cy="376.43" r="1.7" fill="#0563c1"/><circle cx="443.93" cy="367.58" r="1.7" fill="#0563c1"/><text x="291.04" y="425.80" font-size="5.55" fill="#2a2a2a" text-anchor="end" transform="rotate(-30 291.04 425.80)">1 de abr. de...</text><text x="314.67" y="425.80" font-size="5.55" fill="#2a2a2a" text-anchor="end" transform="rotate(-30 314.67 425.80)">15 de abr. d...</text><text x="338.29" y="425.80" font-size="5.55" fill="#2a2a2a" text-anchor="end" transform="rotate(-30 338.29 425.80)">29 de abr. d...</text><text x="361.92" y="425.80" font-size="5.55" fill="#2a2a2a" text-anchor="end" transform="rotate(-30 361.92 425.80)">13 de mai....</text><text x="385.54" y="425.80" font-size="5.55" fill="#2a2a2a" text-anchor="end" transform="rotate(-30 385.54 425.80)">27 de mai....</text><text x="409.17" y="425.80" font-size="5.55" fill="#2a2a2a" text-anchor="end" transform="rotate(-30 409.17 425.80)">10 de jun. d...</text><text x="432.80" y="425.80" font-size="5.55" fill="#2a2a2a" text-anchor="end" transform="rotate(-30 432.80 425.80)">24 de jun. d...</text><rect x="521.20" y="315.00" width="11.00" height="5.00" fill="#ee0a2c"/><text x="534.30" y="319.60" font-size="5.5" fill="#222" text-anchor="start">Tarefas Atrasadas</text><rect x="588.00" y="315.00" width="11.00" height="5.00" fill="#0fae50"/><text x="601.10" y="319.60" font-size="5.45" fill="#222" text-anchor="start">Tarefas Em Dia</text><text x="516.00" y="331.50" font-size="5.6" fill="#262626" text-anchor="end">100%</text><text x="516.00" y="354.00" font-size="5.6" fill="#262626" text-anchor="end">75%</text><text x="516.00" y="376.10" font-size="5.6" fill="#262626" text-anchor="end">50%</text><text x="516.00" y="398.80" font-size="5.6" fill="#262626" text-anchor="end">25%</text><text x="516.00" y="421.30" font-size="5.6" fill="#262626" text-anchor="end">0%</text><rect x="522.20" y="329.40" width="8.10" height="31.66" fill="#0fae50"/><rect x="522.20" y="361.06" width="8.10" height="58.14" fill="#ee0a2c"/><rect x="531.88" y="329.40" width="8.10" height="39.52" fill="#0fae50"/><rect x="531.88" y="368.92" width="8.10" height="50.28" fill="#ee0a2c"/><rect x="541.56" y="329.40" width="8.10" height="39.52" fill="#0fae50"/><rect x="541.56" y="368.92" width="8.10" height="50.28" fill="#ee0a2c"/><rect x="551.24" y="329.40" width="8.10" height="42.93" fill="#0fae50"/><rect x="551.24" y="372.33" width="8.10" height="46.87" fill="#ee0a2c"/><rect x="560.92" y="329.40" width="8.10" height="41.88" fill="#0fae50"/><rect x="560.92" y="371.28" width="8.10" height="47.92" fill="#ee0a2c"/><rect x="570.60" y="329.40" width="8.10" height="37.95" fill="#0fae50"/><rect x="570.60" y="367.35" width="8.10" height="51.85" fill="#ee0a2c"/><rect x="580.28" y="329.40" width="8.10" height="41.88" fill="#0fae50"/><rect x="580.28" y="371.28" width="8.10" height="47.92" fill="#ee0a2c"/><rect x="589.96" y="329.40" width="8.10" height="37.95" fill="#0fae50"/><rect x="589.96" y="367.35" width="8.10" height="51.85" fill="#ee0a2c"/><rect x="599.64" y="329.40" width="8.10" height="37.17" fill="#0fae50"/><rect x="599.64" y="366.57" width="8.10" height="52.63" fill="#ee0a2c"/><rect x="609.32" y="329.40" width="8.10" height="39.00" fill="#0fae50"/><rect x="609.32" y="368.40" width="8.10" height="50.80" fill="#ee0a2c"/><rect x="619.00" y="329.40" width="8.10" height="37.43" fill="#0fae50"/><rect x="619.00" y="366.83" width="8.10" height="52.37" fill="#ee0a2c"/><rect x="628.68" y="329.40" width="8.10" height="46.07" fill="#0fae50"/><rect x="628.68" y="375.47" width="8.10" height="43.73" fill="#ee0a2c"/><rect x="638.36" y="329.40" width="8.10" height="41.62" fill="#0fae50"/><rect x="638.36" y="371.02" width="8.10" height="48.18" fill="#ee0a2c"/><rect x="648.04" y="329.40" width="8.10" height="66.77" fill="#0fae50"/><rect x="648.04" y="396.17" width="8.10" height="23.03" fill="#ee0a2c"/><path d="M521 419.3H657.2" stroke="#666" stroke-width="0.6"/><text x="526.55" y="425.60" font-size="5.55" fill="#2a2a2a" text-anchor="end" transform="rotate(-30 526.55 425.60)">1 de abr. de...</text><text x="545.91" y="425.60" font-size="5.55" fill="#2a2a2a" text-anchor="end" transform="rotate(-30 545.91 425.60)">15 de abr. d...</text><text x="565.27" y="425.60" font-size="5.55" fill="#2a2a2a" text-anchor="end" transform="rotate(-30 565.27 425.60)">29 de abr. d...</text><text x="584.63" y="425.60" font-size="5.55" fill="#2a2a2a" text-anchor="end" transform="rotate(-30 584.63 425.60)">13 de mai....</text><text x="603.99" y="425.60" font-size="5.55" fill="#2a2a2a" text-anchor="end" transform="rotate(-30 603.99 425.60)">27 de mai....</text><text x="623.35" y="425.60" font-size="5.55" fill="#2a2a2a" text-anchor="end" transform="rotate(-30 623.35 425.60)">10 de jun. d...</text><text x="642.71" y="425.60" font-size="5.55" fill="#2a2a2a" text-anchor="end" transform="rotate(-30 642.71 425.60)">24 de jun. d...</text></g></svg>
<!-- menu -->
<div class="a" style="left:25.8px;top:32.6px;width:134.9px;height:170.4px;background:#fff;border-radius:2px;box-shadow:0 1px 3px rgba(0,0,0,.32),0 2px 6px rgba(0,0,0,.16)"></div>
<div class="t" style="left:49.70px;top:43px;font-size:7.9px;color:#2a2d31;">Compartilhar...</div>
<div class="t" style="left:49.70px;top:61px;font-size:7.9px;color:#2a2d31;">Tema e layout</div>
<div class="t" style="left:49.70px;top:79px;font-size:7.9px;color:#2a2d31;">Configurações de relatórios</div>
<div class="t" style="left:49.70px;top:97px;font-size:7.9px;color:#2a2d31;">Histórico de versões</div>
<div class="t" style="left:49.70px;top:115px;font-size:7.9px;color:#2a2d31;">Configurações de publicação</div>
<div class="t" style="left:49.70px;top:133px;font-size:7.9px;color:#2a2d31;">Novo relatório</div>
<div class="t" style="left:49.70px;top:151px;font-size:7.9px;color:#2a2d31;">Fazer uma cópia...</div>
<div class="t" style="left:49.70px;top:169px;font-size:7.9px;color:#2a2d31;">Fazer download como</div>
<div class="t" style="left:49.70px;top:187px;font-size:7.9px;color:#2a2d31;">Incorporar relatório</div>
<div class="a" style="left:26px;top:90.7px;width:134.5px;height:1px;background:#e8e8e8;"></div>
<div class="a" style="left:26px;top:127.2px;width:134.5px;height:1px;background:#e8e8e8;"></div>
<div class="a" style="left:26px;top:180.3px;width:134.5px;height:1px;background:#e8e8e8;"></div>
<div class="a" style="left:26.0px;top:73.1px;width:135.6px;height:16px;background:transparent;border:2.8px solid #f81f2b"></div>
<svg style="left:33.8px;top:95.6px;" width="10" height="10" viewBox="0 0 10 10"><path d="M1.9 2.1A3.9 3.9 0 1 1 1 5.9" fill="none" stroke="#3c4043" stroke-width="0.95"/><path d="M0.5 1.1l0.4 2.3 2.2-0.5" fill="none" stroke="#3c4043" stroke-width="0.9"/><path d="M4.8 2.8v2.4l1.8 1.1" fill="none" stroke="#3c4043" stroke-width="0.9"/></svg>
<svg style="left:143px;top:97.6px;" width="4" height="6" viewBox="0 0 4 6"><path d="M0.3 0.3l3 2.6-3 2.6z" fill="#1f1f1f"/></svg>
<svg style="left:143px;top:169px;" width="4" height="6" viewBox="0 0 4 6"><path d="M0.3 0.3l3 2.6-3 2.6z" fill="#1f1f1f"/></svg>
</body>
</html>
